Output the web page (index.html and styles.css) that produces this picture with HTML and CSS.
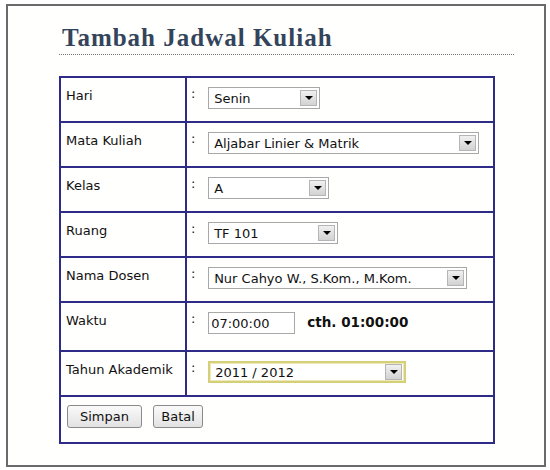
FILE: index.html
```html
<!DOCTYPE html>
<html lang="id">
<head>
<meta charset="utf-8">
<title>Tambah Jadwal Kuliah</title>
<link rel="stylesheet" href="styles.css">
</head>
<body>
<div class="frame">
  <h1 class="title">Tambah Jadwal Kuliah</h1>
  <form class="form">
    <table class="grid">
      <tr>
        <td class="label">Hari</td>
        <td class="field"><span class="colon">:</span>
          <span class="select w-hari"><span class="value">Senin</span><span class="arrow"><svg viewBox="0 0 8 4" width="8" height="4"><path d="M0 0H8L4 4Z"/></svg></span></span>
        </td>
      </tr>
      <tr>
        <td class="label">Mata Kuliah</td>
        <td class="field"><span class="colon">:</span>
          <span class="select w-matkul"><span class="value">Aljabar Linier &amp; Matrik</span><span class="arrow"><svg viewBox="0 0 8 4" width="8" height="4"><path d="M0 0H8L4 4Z"/></svg></span></span>
        </td>
      </tr>
      <tr>
        <td class="label">Kelas</td>
        <td class="field"><span class="colon">:</span>
          <span class="select w-kelas"><span class="value">A</span><span class="arrow"><svg viewBox="0 0 8 4" width="8" height="4"><path d="M0 0H8L4 4Z"/></svg></span></span>
        </td>
      </tr>
      <tr>
        <td class="label">Ruang</td>
        <td class="field"><span class="colon">:</span>
          <span class="select w-ruang"><span class="value">TF 101</span><span class="arrow"><svg viewBox="0 0 8 4" width="8" height="4"><path d="M0 0H8L4 4Z"/></svg></span></span>
        </td>
      </tr>
      <tr>
        <td class="label">Nama Dosen</td>
        <td class="field"><span class="colon">:</span>
          <span class="select w-dosen"><span class="value">Nur Cahyo W., S.Kom., M.Kom.</span><span class="arrow"><svg viewBox="0 0 8 4" width="8" height="4"><path d="M0 0H8L4 4Z"/></svg></span></span>
        </td>
      </tr>
      <tr class="row-waktu">
        <td class="label">Waktu</td>
        <td class="field"><span class="colon">:</span>
          <span class="input w-waktu">07:00:00</span>
          <span class="hint">cth. 01:00:00</span>
        </td>
      </tr>
      <tr>
        <td class="label">Tahun Akademik</td>
        <td class="field"><span class="colon">:</span>
          <span class="select focus w-tahun"><span class="value">2011 / 2012</span><span class="arrow"><svg viewBox="0 0 8 4" width="8" height="4"><path d="M0 0H8L4 4Z"/></svg></span></span>
        </td>
      </tr>
      <tr class="row-actions">
        <td class="actions" colspan="2">
          <button type="button" class="btn btn-simpan">Simpan</button>
          <button type="button" class="btn btn-batal">Batal</button>
        </td>
      </tr>
    </table>
  </form>
</div>
</body>
</html>
```

FILE: styles.css
```css
html, body {
  margin: 0;
  padding: 0;
  background: #ffffff;
}

body {
  font-family: "DejaVu Sans", "Liberation Sans", sans-serif;
  font-size: 13px;
  color: #111;
}

.frame {
  margin: 4px 4px 3px 6px;
  height: 463px;
  border: 2px solid #6a6a6a;
  padding: 17px 0 0 51px;
  box-sizing: border-box;
  background: #fffffd;
}

.title {
  margin: 0 30px 0 0;
  padding: 0 0 1px 3px;
  font-family: "Liberation Serif", "DejaVu Serif", serif;
  font-size: 25px;
  font-weight: bold;
  letter-spacing: 1px;
  color: #34455b;
  line-height: 30px;
  border-bottom: 1px dotted #777;
}

.form {
  margin-top: 21px;
}

.grid {
  border-collapse: collapse;
  width: 436px;
  border: 2px solid #2e2c86;
}

.grid td {
  border: 2px solid #2e2c86;
  vertical-align: top;
  padding: 0;
}

.grid tr {
  height: 45px;
}

.grid .row-waktu {
  height: 49px;
}

.grid .row-actions {
  height: 47px;
}

.label {
  width: 119px;
  padding: 10px 0 0 5px !important;
  line-height: 15px;
  font-size: 13px;
}

.field {
  padding: 9px 0 0 4px !important;
}

.colon {
  display: inline-block;
  width: 13px;
  line-height: 13px;
  font-size: 13px;
  vertical-align: top;
}

.select,
.input {
  display: inline-flex;
  align-items: center;
  box-sizing: border-box;
  height: 22px;
  margin-top: 0;
  border: 1px solid #a8a8a8;
  background: #fff;
  vertical-align: top;
  font-size: 13px;
}

.select .value {
  flex: 1;
  padding-left: 5px;
  white-space: nowrap;
  overflow: hidden;
}

.select .arrow {
  width: 17px;
  height: 16px;
  margin-right: 2px;
  box-sizing: border-box;
  border: 1px solid #b5b5b5;
  background: linear-gradient(#f0f0f0, #d2d2d2);
  display: flex;
  align-items: center;
  justify-content: center;
}

.select .arrow svg {
  fill: #000;
  display: block;
}

.select.focus {
  border: 2px solid #d6cf7a;
  box-shadow: inset 0 0 0 1px #eee9b8;
}

.w-hari { width: 112px; }
.w-matkul { width: 271px; }
.w-kelas { width: 121px; }
.w-ruang { width: 130px; }
.w-dosen { width: 259px; }
.w-tahun { width: 198px; }

.input {
  width: 87px;
  padding-left: 2px;
}

.hint {
  display: inline-block;
  margin: 2px 0 0 8px;
  font-weight: bold;
  font-size: 13.5px;
  vertical-align: top;
}

.actions {
  padding: 8px 0 0 6px !important;
}

.btn {
  height: 23px;
  margin: 0 4px 0 0;
  padding: 0 6px;
  box-sizing: border-box;
  border: 1px solid #8a8a8a;
  border-radius: 3px;
  background: linear-gradient(#fafafa, #e2e2e2);
  font-family: "DejaVu Sans", "Liberation Sans", sans-serif;
  font-size: 13px;
  color: #111;
  vertical-align: top;
}

.btn-simpan { width: 75px; }
.btn-batal { width: 50px; margin-left: 3px; }
```
